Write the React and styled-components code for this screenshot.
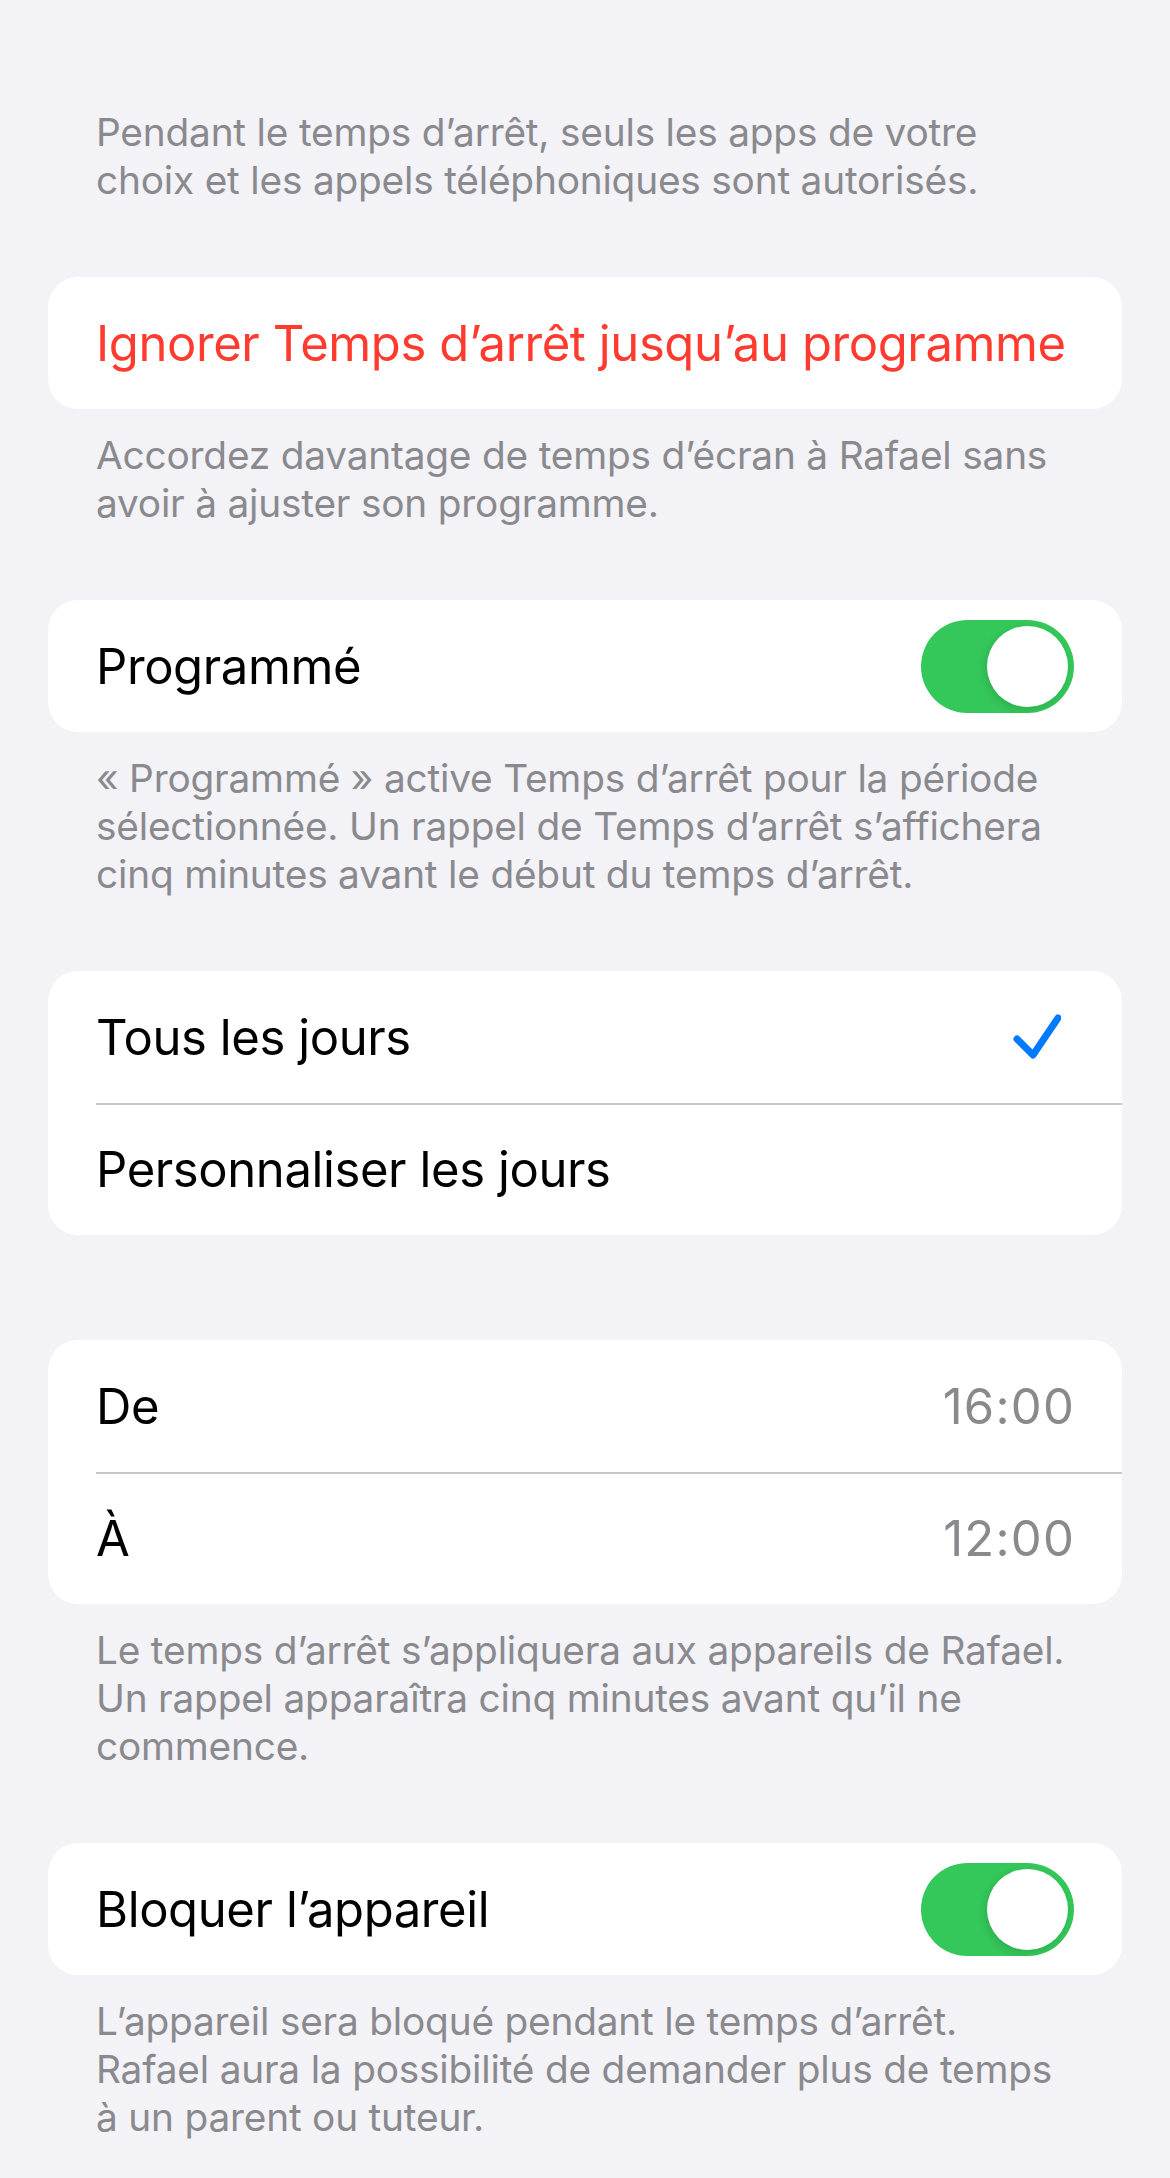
import styled, { createGlobalStyle } from "styled-components";

const GlobalStyle = createGlobalStyle`
  html, body {
    margin: 0;
    padding: 0;
    background: #f2f2f7;
  }
  body {
    font-family: Inter, "Noto Sans", "Liberation Sans", sans-serif;
    -webkit-font-smoothing: antialiased;
  }
`;

const Page = styled.div`
  width: 1170px;
  min-height: 2178px;
  box-sizing: border-box;
  padding: 108px 48px 0;
  background: #f2f2f7;
`;

const Footer = styled.p`
  margin: ${(p) => (p.$first ? "0" : "22px")} 0 0;
  padding: 0 48px;
  font-size: 38.8px;
  line-height: 48px;
  letter-spacing: -0.2px;
  color: #8a8a8e;
`;

const Card = styled.div`
  margin-top: ${(p) => p.$gap ?? 73}px;
  background: #fff;
  border-radius: 30px;
  overflow: hidden;
`;

const Row = styled.div`
  position: relative;
  height: 132px;
  display: flex;
  align-items: center;
  justify-content: space-between;
  padding: 0 48px;
  font-size: 49px;
  letter-spacing: -0.4px;
  white-space: nowrap;
  color: ${(p) => (p.$danger ? "#ff3b30" : "#000")};

  & + &::before {
    content: "";
    position: absolute;
    top: 0;
    left: 48px;
    right: 0;
    height: 1.5px;
    background: #c8c8cc;
  }
`;

const Value = styled.span`
  color: #8a8a8e;
  letter-spacing: 1.2px;
  margin-right: -1px;
`;

const Track = styled.div`
  width: 153px;
  height: 93px;
  border-radius: 47px;
  background: #34c759;
  display: flex;
  align-items: center;
  justify-content: ${(p) => (p.$on ? "flex-end" : "flex-start")};
  padding: 0 6px;
  box-sizing: border-box;
`;

const Thumb = styled.div`
  width: 81px;
  height: 81px;
  border-radius: 50%;
  background: #fff;
  box-shadow: -2px 3px 8px rgba(0, 0, 0, 0.12);
`;

const Check = styled.svg`
  width: 48px;
  height: 48px;
  margin-right: 13px;
`;

const Toggle = ({ on = true }) => (
  <Track $on={on}>
    <Thumb />
  </Track>
);

const CheckMark = () => (
  <Check viewBox="0 0 48 48">
    <path
      d="M4 26 L20 42 L45 5"
      fill="none"
      stroke="#007aff"
      strokeWidth="7"
      strokeLinecap="round"
      strokeLinejoin="round"
    />
  </Check>
);

export default function App() {
  return (
    <>
      <GlobalStyle />
      <Page>
        <Footer $first>
          Pendant le temps d’arrêt, seuls les apps de votre choix et les appels téléphoniques sont autorisés.
        </Footer>

        <Card>
          <Row $danger>Ignorer Temps d’arrêt jusqu’au programme</Row>
        </Card>
        <Footer>
          Accordez davantage de temps d’écran à Rafael sans avoir à ajuster son programme.
        </Footer>

        <Card>
          <Row>
            Programmé
            <Toggle on />
          </Row>
        </Card>
        <Footer>
          « Programmé » active Temps d’arrêt pour la période sélectionnée. Un rappel de Temps d’arrêt s’affichera cinq minutes avant le début du temps d’arrêt.
        </Footer>

        <Card>
          <Row>
            Tous les jours
            <CheckMark />
          </Row>
          <Row>Personnaliser les jours</Row>
        </Card>

        <Card $gap={105}>
          <Row>
            De
            <Value>16:00</Value>
          </Row>
          <Row>
            À
            <Value>12:00</Value>
          </Row>
        </Card>
        <Footer>
          Le temps d’arrêt s’appliquera aux appareils de Rafael. Un rappel apparaîtra cinq minutes avant qu’il ne commence.
        </Footer>

        <Card>
          <Row>
            Bloquer l’appareil
            <Toggle on />
          </Row>
        </Card>
        <Footer>
          L’appareil sera bloqué pendant le temps d’arrêt. Rafael aura la possibilité de demander plus de temps à un parent ou tuteur.
        </Footer>
      </Page>
    </>
  );
}
